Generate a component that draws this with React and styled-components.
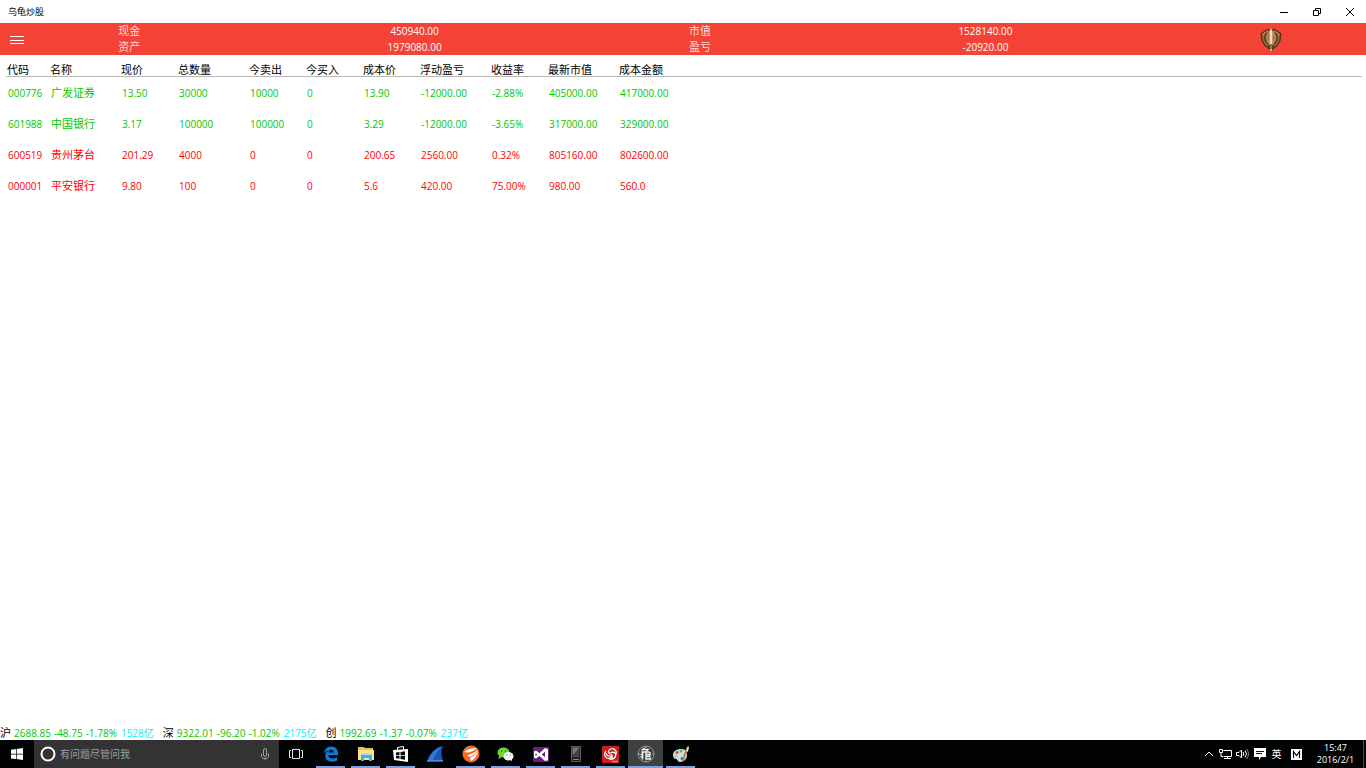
import React from "react";
import styled, { createGlobalStyle } from "styled-components";

/* ========================================================================== */
/*                                   STYLES                                   */
/* ========================================================================== */

const GlobalStyle = createGlobalStyle`
  * {
    box-sizing: border-box;
  }
  body {
    margin: 0;
    background: #fff;
    color: #000;
    font-family: "Open Sans", "Noto Sans CJK SC", sans-serif;
    font-size: 10px;
    line-height: 16px;
  }
  button {
    border: 0;
    padding: 0;
    background: none;
    color: inherit;
    font: inherit;
  }
  svg {
    display: block;
  }
`;

const Screen = styled.div`
  display: flex;
  flex-direction: column;
  min-height: 100vh;
`;

const TitleBar = styled.div`
  display: flex;
  align-items: center;
  justify-content: space-between;
  height: 23px;
  padding-left: 8px;
`;

const AppName = styled.span`
  font-size: 9px;
`;

const WindowButtons = styled.div`
  display: flex;
`;

const WindowButton = styled.button`
  display: grid;
  place-items: center;
  width: 33px;
  height: 23px;
`;

const Summary = styled.header`
  display: grid;
  grid-template-columns: 34px 1fr 2fr 1fr 2fr 1fr;
  align-items: center;
  height: 32px;
  background: #f44336;
  color: #fff;
`;

const MenuButton = styled.button`
  display: grid;
  place-items: center;
  height: 32px;
  padding-top: 2px;
`;

const SummaryCell = styled.div`
  display: flex;
  flex-direction: column;
  text-align: center;
  font-size: ${(props) => (props.$label ? "11px" : "10px")};
  color: ${(props) => (props.$label ? "#fcd9d7" : "#fff")};
`;

const Avatar = styled.div`
  justify-self: center;
  padding-top: 2px;
`;

const Main = styled.main`
  flex: 1;
  padding: 7px 4px 0 6px;
`;

const Holdings = styled.table`
  width: 100%;
  table-layout: fixed;
  border-collapse: collapse;
  text-align: left;
`;

const HeadCell = styled.th`
  padding: 2px 0 0 1px;
  border-bottom: 1px solid #b8b8b8;
  font-size: 11px;
  line-height: 12px;
  font-weight: 400;
  white-space: nowrap;
`;

const HoldingRow = styled.tr`
  height: 31px;
  color: ${(props) => (props.$up ? "#ff0000" : "#00c800")};
`;

const Cell = styled.td`
  padding: 2px 0 0 2px;
  white-space: nowrap;
  font-size: ${(props) => (props.$name ? "11px" : "10px")};
`;

const IndexBar = styled.footer`
  display: flex;
  gap: 9px;
  height: 14px;
  line-height: 14px;
`;

const IndexItem = styled.div`
  display: flex;
  gap: 3px;
`;

const IndexName = styled.span`
  font-size: 11px;
`;

const IndexValue = styled.span`
  color: #00c800;
`;

const Turnover = styled.span`
  padding-left: 1px;
  color: #00f0ff;
`;

const Taskbar = styled.nav`
  display: flex;
  height: 28px;
  background: #020305;
  color: #fff;
`;

const StartButton = styled.button`
  display: grid;
  place-items: center;
  width: 34px;
`;

const SearchBox = styled.label`
  display: flex;
  align-items: center;
  gap: 4px;
  width: 245px;
  padding: 0 9px 0 6px;
  background: #333;
`;

const SearchInput = styled.input`
  flex: 1;
  min-width: 0;
  border: 0;
  padding: 0;
  background: none;
  color: #fff;
  font: inherit;
  outline: none;
  &::placeholder {
    color: #a0a0a0;
    opacity: 1;
  }
`;

const TaskButton = styled.button`
  display: grid;
  place-items: center;
  width: 34px;
`;

const AppButton = styled(TaskButton)`
  width: 35px;
  background-color: ${(props) => (props.$active ? "#3f4042" : "transparent")};
  background-image: ${(props) =>
    props.$idle ? "none" : "linear-gradient(#7ba2e0, #7ba2e0)"};
  background-size: ${(props) => (props.$active ? "35px" : "29px")} 2px;
  background-position: center bottom;
  background-repeat: no-repeat;
`;

const Tray = styled.div`
  display: flex;
  align-items: center;
  margin-left: auto;
`;

const TrayButton = styled.button`
  display: grid;
  place-items: center;
  width: 17px;
  height: 28px;
`;

const InputMode = styled(TrayButton)`
  width: 23px;
`;

const Clock = styled.button`
  width: 55px;
  font-size: 9px;
  line-height: 12px;
  text-align: center;
`;

const ShowDesktop = styled.button`
  width: 3px;
  height: 28px;
  border-left: 1px solid #4a4a4a;
`;

/* ========================================================================== */
/*                                    DATA                                    */
/* ========================================================================== */

const columns = [
  { name: "代码", width: 43 },
  { name: "名称", width: 71 },
  { name: "现价", width: 57 },
  { name: "总数量", width: 71 },
  { name: "今卖出", width: 57 },
  { name: "今买入", width: 57 },
  { name: "成本价", width: 57 },
  { name: "浮动盈亏", width: 71 },
  { name: "收益率", width: 57 },
  { name: "最新市值", width: 71 },
  { name: "成本金额" },
];

const holdings = [
  ["000776", "广发证券", "13.50", "30000", "10000", "0", "13.90", "-12000.00", "-2.88%", "405000.00", "417000.00"],
  ["601988", "中国银行", "3.17", "100000", "100000", "0", "3.29", "-12000.00", "-3.65%", "317000.00", "329000.00"],
  ["600519", "贵州茅台", "201.29", "4000", "0", "0", "200.65", "2560.00", "0.32%", "805160.00", "802600.00"],
  ["000001", "平安银行", "9.80", "100", "0", "0", "5.6", "420.00", "75.00%", "980.00", "560.0"],
];

const indexes = [
  { name: "沪", values: ["2688.85", "-48.75", "-1.78%"], turnover: "1528亿" },
  { name: "深", values: ["9322.01", "-96.20", "-1.02%"], turnover: "2175亿" },
  { name: "创", values: ["1992.69", "-1.37", "-0.07%"], turnover: "237亿" },
];

/* ========================================================================== */
/*                                   ICONS                                    */
/* ========================================================================== */

const ShieldIcon = () => (
  <svg width="22" height="24" viewBox="0 0 22 24">
    <path d="M.5 5.500 4 3 7 1h8l3 2 3.500 2.500-.8 7-3.200 5.500-6.500 4.500L4.500 18l-3.200-5.500z" fill="#54331f" />
    <path d="M2 6 7.500 2.500h7L20 6l-.8 6.500L16.500 17 11 21l-5.500-4-2.700-4.500z" fill="#9c6a3f" />
    <path d="M7 4.500C4 6.500 3.500 12 7.500 15.500M15 4.500c3 2 3.500 7.500-.5 11" fill="none" stroke="#4c2f1c" strokeWidth="1.200" />
    <path d="M9 4.500C6.500 7 6.500 12 9 15M13 4.500c2.500 2.500 2.500 7.500 0 10.500" fill="none" stroke="#bb8856" strokeWidth="1.500" />
    <path d="M2.500 6.500 7.500 3M19.500 6.500l-5-3.500" fill="none" stroke="#cf9e6a" />
    <path d="M9.500 3 11 0l1.500 3v14h-3z" fill="#e9c596" />
    <path d="M11 2v15" stroke="#fff0cc" />
    <path d="M7.500 17.500h7" stroke="#3b2115" strokeWidth="2.500" />
    <path d="M8 17h6" stroke="#d29d62" />
    <path d="M11 18v5.500" stroke="#3b2115" strokeWidth="3" />
    <path d="M11 18v4" stroke="#c89356" strokeWidth="1.500" />
    <circle cx="11" cy="22.300" r="1.300" fill="#d7c36b" />
  </svg>
);

const StartIcon = () => (
  <svg width="12" height="12" viewBox="0 0 12 12" fill="#fff">
    <path d="M0 1.700 5 1v4.700H0zM5.700.9 12 0v5.700H5.700zM0 6.400h5v4.700l-5-.7zM5.700 6.400H12V12l-6.300-.9z" />
  </svg>
);

const MicIcon = () => (
  <svg width="10" height="14" viewBox="0 0 10 14" fill="none" stroke="#a0a0a0">
    <rect x="3.500" y="1.500" width="3" height="8" rx="1.500" />
    <path d="M1.500 6.500v3l1.500 2h4l1.500-2v-3M5 11v2" />
  </svg>
);

const TaskViewIcon = () => (
  <svg width="14" height="12" viewBox="0 0 14 12" fill="none" stroke="#e6e6e6">
    <path d="M3.500 1.500h7v9h-7zM2 2.500H.5v7H2M12 2.500h1.500v7H12" />
  </svg>
);

const EdgeIcon = () => (
  <svg width="16" height="16" viewBox="0 0 16 16">
    <path
      d="M1 7.200C1.500 3 4.300.5 8.300.5c4.400 0 6.700 3 6.700 6.800v1.900H5.400c.2 2.300 2 3.300 4.300 3.300 1.700 0 3.200-.5 4.500-1.200v3.200c-1.400.8-3.200 1.200-5.200 1.200-4 0-6.700-2.200-6.700-5.900 0-2.400 1.300-4.300 3.300-5.300C3.600 4.800 2 5.700 1 7.200zM5.500 6.500h5.300c0-1.700-.8-2.800-2.500-2.800-1.600 0-2.500 1.100-2.800 2.800z"
      fill="#0d7bd8"
    />
  </svg>
);

const FolderIcon = () => (
  <svg width="16" height="14" viewBox="0 0 16 14">
    <path d="M0 0h6l1 1h8v12H0z" fill="#e9bd55" />
    <path d="M0 3h16v10H0z" fill="#ffe28a" />
    <path d="M4 7h9l1 1v6h-3v-3H6v3H3V8z" fill="#42aee6" />
    <path d="M4 6h9v2H4z" fill="#a5ddf5" />
  </svg>
);

const StoreIcon = () => (
  <svg width="16" height="16" viewBox="0 0 16 16">
    <path d="M4.500 4V1.500l6-1V4" fill="none" stroke="#fff" />
    <path d="m0 4 15-1v13L1 14z" fill="#fff" />
    <path d="M3 6.500 6.500 6v3H3zM7.500 5.900 12 5.300V9H7.500zM3 9.800h3.500v3L3 12.300zM7.500 9.800H12v4l-4.500-.8z" fill="#08090b" />
  </svg>
);

const FinIcon = () => (
  <svg width="17" height="16" viewBox="0 0 17 16">
    <path d="M0 15C3 7 8 1.500 16 0c-2 4-2 10 0 15z" fill="#1757b7" />
    <path d="M1.500 14C4 7 8.500 2.500 15 .700 11 4 8 8 6 14z" fill="#3478d0" />
    <path d="M0 15h16" stroke="#8abef5" />
  </svg>
);

const SwirlIcon = () => (
  <svg width="18" height="18" viewBox="0 0 18 18">
    <circle cx="9" cy="9" r="8.500" fill="#f36a20" />
    <path d="M2 7C5 4 10 3 15 3c-2 2-5 3.500-9 4.500zM6 10c4-1 8-3 10-6-1 4-4 6-8 8l-2-1zM8 13c4-2 6-4 8-7-1 5-3 8-7 10z" fill="#fff" />
  </svg>
);

const WeChatIcon = () => (
  <svg width="17" height="15" viewBox="0 0 17 15">
    <ellipse cx="6.500" cy="5.500" rx="6" ry="5" fill="#70d23f" />
    <path d="m2 9-.5 3L5 10z" fill="#70d23f" />
    <ellipse cx="11.500" cy="9.200" rx="5" ry="4.300" fill="#f2f5f0" />
    <path d="m13 12 2 2.500V11z" fill="#f2f5f0" />
    <path d="M4 4h1M8 4h1" stroke="#245c18" strokeWidth="1.500" />
    <path d="M9.500 8h1M13 8h1" stroke="#777" />
  </svg>
);

const VisualStudioIcon = () => (
  <svg width="16" height="16" viewBox="0 0 16 16">
    <path d="M0 1h16v15H0z" fill="#68217a" />
    <path
      d="M1 5.500 3 4.500l3.500 2.700L12 2l3 1.200v11L12 15l-5.500-5L3 12.500l-2-1zM2.500 7v3.200L4.200 8.600zM12 5.700 8.700 8.500 12 11.200z"
      fill="#fff"
      fillRule="evenodd"
    />
  </svg>
);

const PhoneIcon = () => (
  <svg width="10" height="16" viewBox="0 0 10 16">
    <rect x=".5" y=".5" width="9" height="15" fill="#151515" stroke="#5c5c5c" />
    <path d="M1.500 1.500h7v10h-7z" fill="#444" />
    <path d="M1.500 1.500h7L1.500 9z" fill="#777" />
    <path d="M2 13.500h6" stroke="#8f8f8f" />
  </svg>
);

const RedSwirlIcon = () => (
  <svg width="17" height="17" viewBox="0 0 17 17">
    <path d="M0 0h17v17H0z" fill="#c61f24" />
    <g fill="none" stroke="#fff" strokeWidth="1.300">
      <path d="M8 8C6 6.500 6 4 8.500 3c3-1 6 1 6 4.500M8.500 7c3-2 6 0 5 3-.5 2-2 3-4 3M9 8c1 3-1 5-4 4C2 11 2 7 4 5M8 9.500c-2 1-4 0-3.500-2.500M9.500 9c1.500 1.500.5 4-2 5" />
    </g>
    <path d="M10 15.500h6" stroke="#f58a25" strokeWidth="1.500" />
  </svg>
);

const TurtleIcon = () => (
  <svg width="18" height="18" viewBox="0 0 18 18" fill="none" stroke="#f2f2f2">
    <circle cx="9" cy="9" r="8" stroke="#8f8f8f" />
    <path d="M9 1v2M9 15.500V17M1 9h2M15.500 9H17" stroke="#bbb" />
    <path d="M7.500 3 4.500 5.500M6 4.500h5L9.500 6M4.500 7h8M9 6.500V14h4.500v-1.500" strokeWidth="1.300" />
    <path d="M3.500 9.500h3M3.500 12h3M5.500 7v7.500M9 9.500h4M9 11.500h4M13 7v4.500" strokeWidth="1.300" />
  </svg>
);

const PaintIcon = () => (
  <svg width="18" height="17" viewBox="0 0 18 17">
    <path d="M1 9c0-4 4-6 8-6s6 2 6 6-3 7-7 7c-3 0-2-3-4-3s-3-2-3-4z" fill="#c4dfed" />
    <circle cx="5" cy="6.500" r="1.500" fill="#e54334" />
    <circle cx="9" cy="5" r="1.500" fill="#5bb64c" />
    <circle cx="4" cy="10" r="1.500" fill="#e8bd35" />
    <circle cx="10" cy="12.500" r="1.500" fill="#3377c5" />
    <path d="m16 1-3 7-2 7" fill="none" stroke="#c47b32" strokeWidth="2" />
    <path d="m14 5 2-5 1 1-1 5z" fill="#f3d49b" />
  </svg>
);

const ChevronIcon = () => (
  <svg width="10" height="6" viewBox="0 0 10 6" fill="none" stroke="#fff">
    <path d="m1 5 4-4 4 4" />
  </svg>
);

const NetworkIcon = () => (
  <svg width="13" height="12" viewBox="0 0 13 12" fill="none" stroke="#fff">
    <path d="M4.500 2.500h8v6h-8M8.500 8.500v2M5 10.500h7M.5 1.500h3v3h-3zM2 4.500v4h2" />
  </svg>
);

const VolumeIcon = () => (
  <svg width="13" height="12" viewBox="0 0 13 12" fill="none" stroke="#fff">
    <path d="M.5 4.500H3L5.500 2v8L3 7.500H.5z" />
    <path d="M7 4q1.500 2 0 4M9 2.500q3 3.500 0 7" />
    <path d="M10.500 1q4 5 0 10" stroke="#888" />
  </svg>
);

const MessageIcon = () => (
  <svg width="12" height="12" viewBox="0 0 12 12">
    <path d="M0 0h12v9H7l-2 3V9H0z" fill="#fff" />
    <path d="M2 3.500h8M2 5.500h6" stroke="#111" />
  </svg>
);

const ModeIcon = () => (
  <svg width="11" height="11" viewBox="0 0 11 11">
    <path d="M0 0h11v11H0z" fill="#fff" />
    <path d="M2.500 9V2.500l3 4 3-4V9" fill="none" stroke="#000" strokeWidth="1.200" />
  </svg>
);

/* ------------------------------------ . ----------------------------------- */

const apps = [
  { name: "Edge", Icon: EdgeIcon },
  { name: "文件资源管理器", Icon: FolderIcon },
  { name: "应用商店", Icon: StoreIcon },
  { name: "Wireshark", Icon: FinIcon, idle: true },
  { name: "行情", Icon: SwirlIcon },
  { name: "微信", Icon: WeChatIcon },
  { name: "Visual Studio", Icon: VisualStudioIcon },
  { name: "手机", Icon: PhoneIcon },
  { name: "证券", Icon: RedSwirlIcon },
  { name: "乌龟炒股", Icon: TurtleIcon, active: true },
  { name: "画图", Icon: PaintIcon },
];

const WindowTitle = () => (
  <TitleBar>
    <AppName>乌龟炒股</AppName>
    <WindowButtons>
      <WindowButton aria-label="最小化">
        <svg width="8" height="8" stroke="#000">
          <path d="M0 4.500h8" />
        </svg>
      </WindowButton>
      <WindowButton aria-label="还原">
        <svg width="8" height="8" fill="none" stroke="#000">
          <path d="M.5 2.500h5v5h-5zM2.500 2V.5h5v5H6" />
        </svg>
      </WindowButton>
      <WindowButton aria-label="关闭">
        <svg width="8" height="8" stroke="#000">
          <path d="m0 0 8 8M8 0 0 8" />
        </svg>
      </WindowButton>
    </WindowButtons>
  </TitleBar>
);

const AccountSummary = () => (
  <Summary>
    <MenuButton aria-label="菜单">
      <svg width="14" height="8" stroke="#fff">
        <path d="M0 .5h14M0 4.500h14M0 7.500h14" />
      </svg>
    </MenuButton>
    <SummaryCell $label>
      <span>现金</span>
      <span>资产</span>
    </SummaryCell>
    <SummaryCell>
      <span>450940.00</span>
      <span>1979080.00</span>
    </SummaryCell>
    <SummaryCell $label>
      <span>市值</span>
      <span>盈亏</span>
    </SummaryCell>
    <SummaryCell>
      <span>1528140.00</span>
      <span>-20920.00</span>
    </SummaryCell>
    <Avatar>
      <ShieldIcon />
    </Avatar>
  </Summary>
);

const HoldingsTable = () => (
  <Holdings>
    <colgroup>
      {columns.map((column) => (
        <col key={column.name} width={column.width} />
      ))}
    </colgroup>
    <thead>
      <tr>
        {columns.map((column) => (
          <HeadCell key={column.name}>{column.name}</HeadCell>
        ))}
      </tr>
    </thead>
    <tbody>
      {holdings.map((row) => (
        // red for gains, green for losses
        <HoldingRow key={row[0]} $up={!row[7].startsWith("-")}>
          {row.map((value, i) => (
            <Cell key={columns[i].name} $name={i === 1}>
              {value}
            </Cell>
          ))}
        </HoldingRow>
      ))}
    </tbody>
  </Holdings>
);

const App = () => {
  return (
    <Screen>
      <GlobalStyle />
      <WindowTitle />
      <AccountSummary />
      <Main>
        <HoldingsTable />
      </Main>

      <IndexBar>
        {indexes.map((index) => (
          <IndexItem key={index.name}>
            <IndexName>{index.name}</IndexName>
            {index.values.map((value) => (
              <IndexValue key={value}>{value}</IndexValue>
            ))}
            <Turnover>{index.turnover}</Turnover>
          </IndexItem>
        ))}
      </IndexBar>

      {/* ----- taskbar ----- */}
      <Taskbar>
        <StartButton aria-label="开始">
          <StartIcon />
        </StartButton>
        <SearchBox>
          <svg width="16" height="16" fill="none" stroke="#fff" strokeWidth="2">
            <circle cx="8" cy="8" r="6.500" />
          </svg>
          <SearchInput type="text" aria-label="搜索" placeholder="有问题尽管问我" />
          <MicIcon />
        </SearchBox>
        <TaskButton aria-label="任务视图">
          <TaskViewIcon />
        </TaskButton>
        {apps.map(({ name, Icon, idle, active }) => (
          <AppButton key={name} aria-label={name} $idle={idle} $active={active}>
            <Icon />
          </AppButton>
        ))}
        <Tray>
          <TrayButton aria-label="显示隐藏的图标">
            <ChevronIcon />
          </TrayButton>
          <TrayButton aria-label="网络">
            <NetworkIcon />
          </TrayButton>
          <TrayButton aria-label="音量">
            <VolumeIcon />
          </TrayButton>
          <TrayButton aria-label="通知">
            <MessageIcon />
          </TrayButton>
          <TrayButton>英</TrayButton>
          <InputMode aria-label="输入法">
            <ModeIcon />
          </InputMode>
          <Clock>
            15:47
            <br />
            2016/2/1
          </Clock>
          <ShowDesktop aria-label="显示桌面" />
        </Tray>
      </Taskbar>
    </Screen>
  );
};

export default App;
